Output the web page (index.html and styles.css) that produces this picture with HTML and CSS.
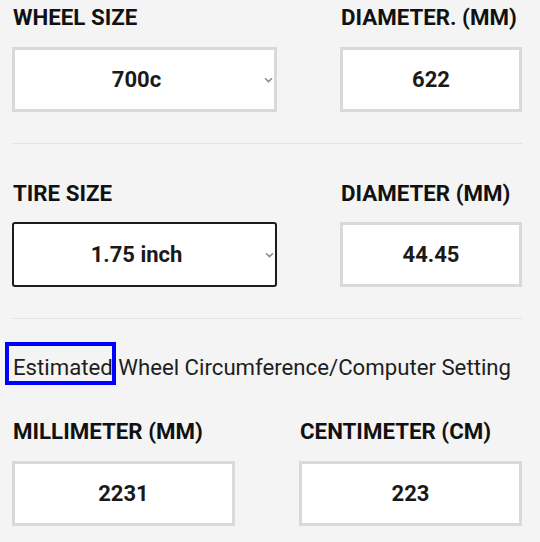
FILE: index.html
```html
<!DOCTYPE html>
<html lang="en">
<head>
<meta charset="utf-8">
<title>Wheel Circumference</title>
<link rel="stylesheet" href="styles.css">
</head>
<body>
<div class="page">
  <div class="row row-top">
    <div class="col col-select">
      <div class="label">WHEEL SIZE</div>
      <div class="select">
        <span class="select-value">700c</span>
        <svg class="chevron" width="9" height="6" viewBox="0 0 9 6"><path d="M1 1.2 L4.5 4.6 L8 1.2" fill="none" stroke="#8a8a8a" stroke-width="1.5"/></svg>
      </div>
    </div>
    <div class="col col-field">
      <div class="label">DIAMETER. (MM)</div>
      <div class="field">622</div>
    </div>
  </div>
  <div class="divider"></div>
  <div class="row row-tire">
    <div class="col col-select">
      <div class="label">TIRE SIZE</div>
      <div class="select select-active">
        <span class="select-value">1.75 inch</span>
        <svg class="chevron" width="9" height="6" viewBox="0 0 9 6"><path d="M1 1.2 L4.5 4.6 L8 1.2" fill="none" stroke="#8a8a8a" stroke-width="1.5"/></svg>
      </div>
    </div>
    <div class="col col-field">
      <div class="label">DIAMETER (MM)</div>
      <div class="field">44.45</div>
    </div>
  </div>
  <div class="divider divider-2"></div>
  <p class="result-title"><span class="highlight">Estimated</span> Wheel Circumference/Computer Setting</p>
  <div class="row row-result">
    <div class="col col-half">
      <div class="label">MILLIMETER (MM)</div>
      <div class="field">2231</div>
    </div>
    <div class="col col-half">
      <div class="label">CENTIMETER (CM)</div>
      <div class="field">223</div>
    </div>
  </div>
</div>
</body>
</html>
```
FILE: styles.css
```css
* { box-sizing: border-box; }
html, body { margin: 0; padding: 0; }
body {
  background: #f4f4f4;
  font-family: Roboto, "Liberation Sans", Arial, sans-serif;
  color: #111;
  width: 540px;
  height: 542px;
  overflow: hidden;
}
.page {
  padding: 4px 18px 0 12px;
}
.row {
  display: flex;
  justify-content: space-between;
}
.col-select { width: 265px; }
.col-field { width: 182px; }
.col-half { width: 223px; }
.label {
  font-size: 22.3px;
  font-weight: 700;
  line-height: 26px;
  color: #111;
  padding-left: 1px;
  margin-bottom: 17px;
  white-space: nowrap;
}
.row-tire .label { margin-bottom: 16px; }
.select {
  height: 65px;
  background: #fff;
  border: 3px solid #d9d9d9;
  display: flex;
  align-items: center;
}
.select-active {
  border: 2px solid #1c1c1c;
  border-radius: 3px;
}
.select-value {
  flex: 1;
  text-align: center;
  padding-right: 6px;
  font-size: 22px;
  font-weight: 700;
  color: #1a1a1a;
}
.chevron {
  flex: none;
  margin-right: 1px;
}
.field {
  height: 65px;
  background: #fff;
  border: 3px solid #d9d9d9;
  display: flex;
  align-items: center;
  justify-content: center;
  font-size: 22px;
  font-weight: 700;
  color: #1a1a1a;
}
.divider {
  height: 1px;
  background: #e2e2e2;
  margin: 31px 0 36px 1px;
}
.divider-2 { margin-bottom: 35px; }
.result-title {
  margin: 0 0 38px 1px;
  font-size: 22.2px;
  line-height: 26px;
  font-weight: 400;
  color: #1e1e1e;
  white-space: nowrap;
}
.highlight {
  position: relative;
}
.highlight::after {
  content: "";
  position: absolute;
  left: -8px;
  right: -3px;
  top: -12px;
  bottom: -5px;
  border: 4px solid #0000ff;
}
```
